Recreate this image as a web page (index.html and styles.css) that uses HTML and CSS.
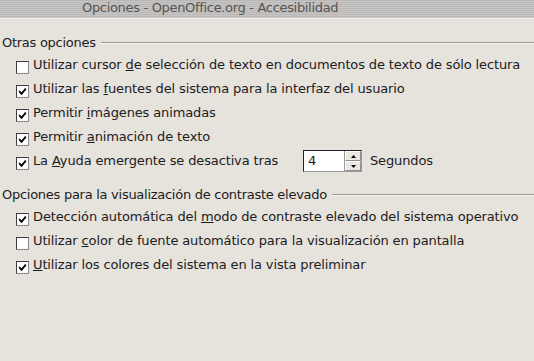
FILE: index.html
```html
<!DOCTYPE html>
<html lang="es">
<head>
  <meta charset="UTF-8" />
  <title>Opciones - OpenOffice.org - Accesibilidad</title>
  <link rel="stylesheet" href="styles.css">
</head>
<body>
  <div class="titlebar">Opciones - OpenOffice.org - Accesibilidad</div>

  <div class="content">
    <div class="group">
      <div class="group-head"><span>Otras opciones</span><div class="rule"></div></div>
      <div class="options">
        <div class="option">
          <span class="check"></span>
          <span>Utilizar cursor <u>d</u>e selección de texto en documentos de texto de sólo lectura</span>
        </div>
        <div class="option">
          <span class="check on"><svg width="9" height="9" viewBox="0 0 9 9"><path d="M1.2 4.2 L3.5 6.8 L7.8 1.6" fill="none" stroke="#000" stroke-width="1.8"/></svg></span>
          <span>Utilizar las <u>f</u>uentes del sistema para la interfaz del usuario</span>
        </div>
        <div class="option">
          <span class="check on"><svg width="9" height="9" viewBox="0 0 9 9"><path d="M1.2 4.2 L3.5 6.8 L7.8 1.6" fill="none" stroke="#000" stroke-width="1.8"/></svg></span>
          <span>Permitir <u>i</u>mágenes animadas</span>
        </div>
        <div class="option">
          <span class="check on"><svg width="9" height="9" viewBox="0 0 9 9"><path d="M1.2 4.2 L3.5 6.8 L7.8 1.6" fill="none" stroke="#000" stroke-width="1.8"/></svg></span>
          <span>Permitir <u>a</u>nimación de texto</span>
        </div>
        <div class="option">
          <span class="check on"><svg width="9" height="9" viewBox="0 0 9 9"><path d="M1.2 4.2 L3.5 6.8 L7.8 1.6" fill="none" stroke="#000" stroke-width="1.8"/></svg></span>
          <span class="delay-label">La <u>A</u>yuda emergente se desactiva tras</span>
          <div class="spin">
            <span class="spin-value">4</span>
            <div class="spin-buttons">
              <div class="spin-btn"><svg width="5" height="3" viewBox="0 0 5 3"><path d="M2.5 0 L5 3 L0 3 Z" fill="#000"/></svg></div>
              <div class="spin-btn"><svg width="5" height="3" viewBox="0 0 5 3"><path d="M0 0 L5 0 L2.5 3 Z" fill="#000"/></svg></div>
            </div>
          </div>
          <span class="unit">Segundos</span>
        </div>
      </div>
    </div>

    <div class="group second">
      <div class="group-head"><span>Opciones para la visualización de contraste elevado</span><div class="rule"></div></div>
      <div class="options">
        <div class="option">
          <span class="check on"><svg width="9" height="9" viewBox="0 0 9 9"><path d="M1.2 4.2 L3.5 6.8 L7.8 1.6" fill="none" stroke="#000" stroke-width="1.8"/></svg></span>
          <span>Detección automática del <u>m</u>odo de contraste elevado del sistema operativo</span>
        </div>
        <div class="option">
          <span class="check"></span>
          <span>Utilizar <u>c</u>olor de fuente automático para la visualización en pantalla</span>
        </div>
        <div class="option">
          <span class="check on"><svg width="9" height="9" viewBox="0 0 9 9"><path d="M1.2 4.2 L3.5 6.8 L7.8 1.6" fill="none" stroke="#000" stroke-width="1.8"/></svg></span>
          <span><u>U</u>tilizar los colores del sistema en la vista preliminar</span>
        </div>
      </div>
    </div>
  </div>
</body>
</html>
```

FILE: styles.css
```css
body {
  margin: 0;
  font-family: "DejaVu Sans", Verdana, sans-serif;
  font-size: 13px;
  letter-spacing: -0.13px;
  color: #1c1c1c;
  background-color: #e6e2dc;
  height: 361px;
  overflow: hidden;
}
.titlebar {
  height: 18px;
  line-height: 15px;
  padding-left: 82px;
  letter-spacing: -0.32px;
  color: #555;
  background: repeating-linear-gradient(to bottom, #bab8b6 0, #bab8b6 1px, #c8c6c4 1px, #c8c6c4 2px);
  border-bottom: 1px solid #f6f4f0;
  white-space: nowrap;
}
.content {
  padding-top: 14px;
}
.group-head {
  display: flex;
  align-items: center;
  height: 20px;
  line-height: 20px;
  padding-left: 2px;
  letter-spacing: -0.27px;
  white-space: nowrap;
}
.rule {
  flex: 1;
  margin-left: 5px;
  height: 1px;
  background-color: #9c9a98;
  border-bottom: 1px solid #f8f6f2;
}
.second {
  margin-top: 12px;
}
.options {
  padding-left: 16px;
}
.option {
  display: flex;
  align-items: center;
  height: 24px;
  line-height: 24px;
  white-space: nowrap;
}
.check {
  box-sizing: border-box;
  width: 13px;
  height: 13px;
  margin-top: 5px;
  margin-right: 4px;
  flex-shrink: 0;
  background-color: #fff;
  border: 1px solid #3c3c3c;
  border-right-color: #8a8a8a;
  border-bottom-color: #8a8a8a;
  display: flex;
  align-items: center;
  justify-content: center;
}
.delay-label {
  width: 270px;
}
.spin {
  box-sizing: border-box;
  display: flex;
  width: 59px;
  height: 22px;
  background-color: #fff;
  border: 1px solid #222;
  border-right-color: #9a9a9a;
  border-bottom-color: #9a9a9a;
}
.spin-value {
  flex: 1;
  line-height: 20px;
  padding-left: 4px;
}
.spin-buttons {
  display: flex;
  flex-direction: column;
  width: 16px;
  border-left: 1px solid #9a9a9a;
}
.spin-btn {
  flex: 1;
  display: flex;
  align-items: center;
  justify-content: center;
  background-color: #ebe8e3;
  border: 1px solid #fff;
  border-right-color: #8e8e8e;
  border-bottom-color: #8e8e8e;
}
.unit {
  margin-left: 8px;
}
```
